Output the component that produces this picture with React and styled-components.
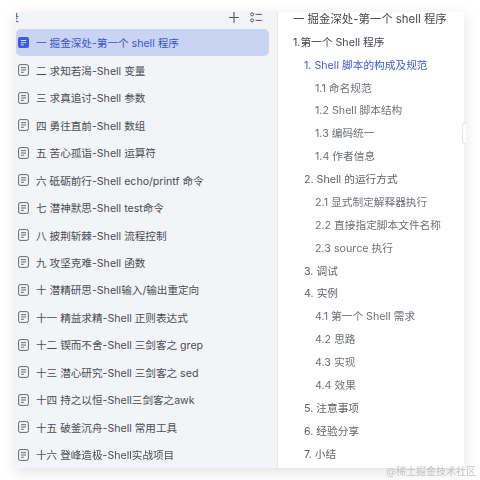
import React from 'react';
import styled, { createGlobalStyle } from 'styled-components';

const fontStack = `Inter, "Noto Sans CJK SC", sans-serif`;

const GlobalStyle = createGlobalStyle`
  html, body {
    margin: 0;
    padding: 0;
    background: #fff;
  }
  body {
    width: 480px;
    height: 480px;
    overflow: hidden;
    font-family: ${fontStack};
  }
`;

const Page = styled.div`
  position: relative;
  width: 480px;
  height: 480px;
  padding: 12px 16px 12px 16px;
  box-sizing: border-box;
  filter: blur(0.45px);
`;

const Window = styled.div`
  display: flex;
  height: 456px;
  background: #fff;
  box-shadow: 0 4px 14px rgba(0, 0, 0, 0.12);
  overflow: hidden;
`;

const Sidebar = styled.div`
  width: 262px;
  flex: none;
  display: flex;
  flex-direction: column;
  background: #f3f4f7;
  border-right: 1px solid #e9eaee;
  box-sizing: border-box;
`;

const SidebarHead = styled.div`
  height: 17px;
  display: flex;
  align-items: flex-start;
  justify-content: space-between;
  flex: none;
`;

const ClippedTitle = styled.span`
  width: 3px;
  overflow: hidden;
  direction: rtl;
  font-size: 11px;
  color: #555;
  line-height: 12px;
`;

const HeadIcons = styled.div`
  display: flex;
  align-items: center;
  gap: 11px;
  padding-right: 15px;
`;

const DocList = styled.div`
  display: flex;
  flex-direction: column;
  padding-right: 8px;
`;

const DocRow = styled.div`
  height: 27.47px;
  display: flex;
  align-items: center;
  gap: 7px;
  padding-left: 2px;
  border-radius: 5px;
  font-size: 10.6px;
  white-space: nowrap;
  background: ${(p) => (p.$active ? '#c9d4f3' : 'transparent')};
  color: ${(p) => (p.$active ? '#3a55cf' : '#4a4d54')};
`;

const Outline = styled.div`
  flex: 1;
  display: flex;
  flex-direction: column;
  margin-top: -5px;
  padding-left: 15px;
  min-width: 0;
`;

const OutlineRow = styled.div`
  height: 22.88px;
  display: flex;
  align-items: center;
  flex: none;
  font-size: ${(p) => (p.$title ? '11.4px' : '10.7px')};
  white-space: nowrap;
  padding-left: ${(p) => p.$indent * 11}px;
  color: ${(p) => (p.$active ? '#3f5bd6' : p.$indent === 2 ? '#6d7076' : p.$indent === 0 ? '#45484f' : '#5c5f65')};
`;

const ScrollHandle = styled.div`
  position: absolute;
  left: 462px;
  top: 123px;
  width: 3px;
  height: 19px;
  border: 1px solid #e4e5e8;
  border-right: none;
  border-radius: 3px 0 0 3px;
  background: #fff;
`;

const Watermark = styled.div`
  position: absolute;
  right: 4px;
  top: 464px;
  font-size: 10px;
  line-height: 14px;
  color: #c3c3c6;
  white-space: nowrap;
`;

const PlusIcon = () => (
  <svg width="10" height="11" viewBox="0 0 10 11" fill="none" stroke="#55585e" strokeWidth="1.1">
    <path d="M5 0v11M0 5.5h10" />
  </svg>
);

const ListIcon = () => (
  <svg width="12" height="11" viewBox="0 0 12 11" fill="none" stroke="#55585e" strokeWidth="1">
    <circle cx="2.1" cy="2.4" r="1.5" />
    <circle cx="2.1" cy="8.4" r="1.5" />
    <path d="M5.5 2.4h6.5M5.5 8.4h6.5" />
  </svg>
);

const DocIcon = ({ active }) =>
  active ? (
    <svg width="11" height="11" viewBox="0 0 11 11">
      <rect x="0" y="0" width="11" height="11" rx="2" fill="#3a5be0" />
      <path d="M2.8 3.5h5.4M2.8 5.7h5.4M2.8 7.9h3" stroke="#dfe5fb" strokeWidth="1" />
    </svg>
  ) : (
    <svg width="11" height="12" viewBox="0 0 11 12" fill="none" stroke="#5e6167" strokeWidth="0.95">
      <rect x="0.6" y="0.6" width="9.8" height="10.8" rx="1.6" />
      <path d="M3 3.7h5M3 6h5M3 8.3h2.8" />
    </svg>
  );

const docs = [
  '一 掘金深处-第一个 shell 程序',
  '二 求知若渴-Shell 变量',
  '三 求真追讨-Shell 参数',
  '四 勇往直前-Shell 数组',
  '五 苦心孤诣-Shell 运算符',
  '六 砥砺前行-Shell echo/printf 命令',
  '七 潜神默思-Shell test命令',
  '八 披荆斩棘-Shell 流程控制',
  '九 攻坚克难-Shell 函数',
  '十 潜精研思-Shell输入/输出重定向',
  '十一 精益求精-Shell 正则表达式',
  '十二 锲而不舍-Shell 三剑客之 grep',
  '十三 潜心研究-Shell 三剑客之 sed',
  '十四 持之以恒-Shell三剑客之awk',
  '十五 破釜沉舟-Shell 常用工具',
  '十六 登峰造极-Shell实战项目',
];

const outline = [
  { text: '一 掘金深处-第一个 shell 程序', indent: 0, title: true },
  { text: '1.第一个 Shell 程序', indent: 0 },
  { text: '1. Shell 脚本的构成及规范', indent: 1, active: true },
  { text: '1.1 命名规范', indent: 2 },
  { text: '1.2 Shell 脚本结构', indent: 2 },
  { text: '1.3 编码统一', indent: 2 },
  { text: '1.4 作者信息', indent: 2 },
  { text: '2. Shell 的运行方式', indent: 1 },
  { text: '2.1 显式制定解释器执行', indent: 2 },
  { text: '2.2 直接指定脚本文件名称', indent: 2 },
  { text: '2.3 source 执行', indent: 2 },
  { text: '3. 调试', indent: 1 },
  { text: '4. 实例', indent: 1 },
  { text: '4.1 第一个 Shell 需求', indent: 2 },
  { text: '4.2 思路', indent: 2 },
  { text: '4.3 实现', indent: 2 },
  { text: '4.4 效果', indent: 2 },
  { text: '5. 注意事项', indent: 1 },
  { text: '6. 经验分享', indent: 1 },
  { text: '7. 小结', indent: 1 },
];

const App = () => (
  <Page>
    <GlobalStyle />
    <Window>
      <Sidebar>
        <SidebarHead>
          <ClippedTitle>录</ClippedTitle>
          <HeadIcons>
            <PlusIcon />
            <ListIcon />
          </HeadIcons>
        </SidebarHead>
        <DocList>
          {docs.map((d, i) => (
            <DocRow key={d} $active={i === 0}>
              <DocIcon active={i === 0} />
              {d}
            </DocRow>
          ))}
        </DocList>
      </Sidebar>
      <Outline>
        {outline.map((o) => (
          <OutlineRow key={o.text} $indent={o.indent} $active={o.active} $title={o.title}>
            {o.text}
          </OutlineRow>
        ))}
      </Outline>
    </Window>
    <ScrollHandle />
    <Watermark>@稀土掘金技术社区</Watermark>
  </Page>
);

export default App;
